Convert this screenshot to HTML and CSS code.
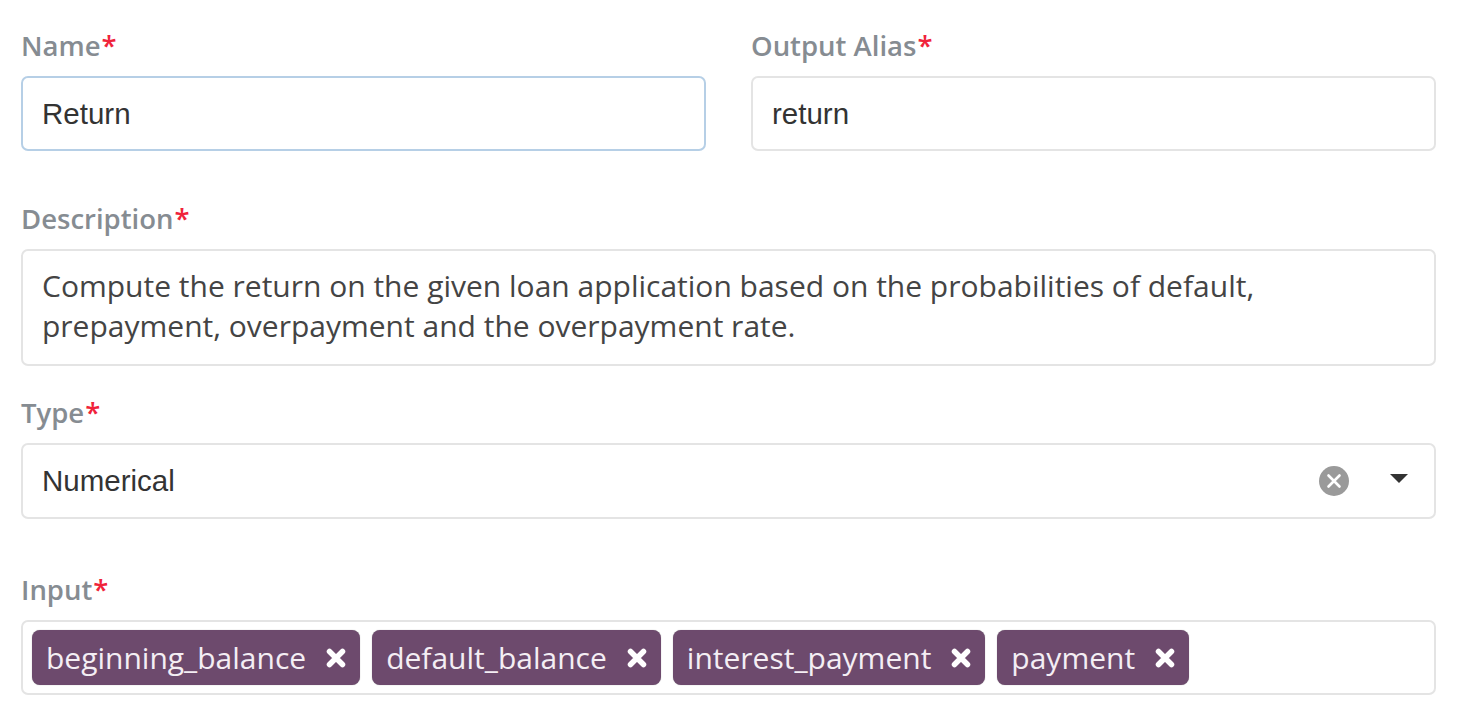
FILE: index.html
```html
<!DOCTYPE html>
<html>
<head>
<meta charset="utf-8">
<link rel="stylesheet" href="styles.css">
</head>
<body>
<form class="form">
  <div class="row group group-top">
    <div class="col">
      <label class="label">Name<span class="req">*</span></label>
      <div class="field field-focus"><span class="sans">Return</span></div>
    </div>
    <div class="col">
      <label class="label">Output Alias<span class="req">*</span></label>
      <div class="field"><span class="sans">return</span></div>
    </div>
  </div>
  <div class="group group-desc">
    <label class="label">Description<span class="req">*</span></label>
    <div class="field field-area">Compute the return on the given loan application based on the probabilities of default, prepayment, overpayment and the overpayment rate.</div>
  </div>
  <div class="group group-type">
    <label class="label">Type<span class="req">*</span></label>
    <div class="field field-select">
      <span class="sans select-value">Numerical</span>
      <span class="clear"><svg width="30" height="30" viewBox="0 0 30 30"><circle cx="15" cy="15" r="15" fill="#9a9a9a"/><path d="M9.5 9.5 L20.5 20.5 M20.5 9.5 L9.5 20.5" stroke="#fff" stroke-width="2.6" stroke-linecap="round"/></svg></span>
      <span class="caret"><svg width="18" height="10" viewBox="0 0 18 10"><path d="M0 0 H18 L9 9 Z" fill="#333"/></svg></span>
    </div>
  </div>
  <div class="group">
    <label class="label">Input<span class="req">*</span></label>
    <div class="field field-tags">
      <span class="tag">beginning_balance<svg class="tag-x" width="20" height="20" viewBox="0 0 20 20"><path d="M3.5 3.5 L16.5 16.5 M16.5 3.5 L3.5 16.5" stroke="#fff" stroke-width="5.5" stroke-linecap="round"/></svg></span>
      <span class="tag">default_balance<svg class="tag-x" width="20" height="20" viewBox="0 0 20 20"><path d="M3.5 3.5 L16.5 16.5 M16.5 3.5 L3.5 16.5" stroke="#fff" stroke-width="5.5" stroke-linecap="round"/></svg></span>
      <span class="tag">interest_payment<svg class="tag-x" width="20" height="20" viewBox="0 0 20 20"><path d="M3.5 3.5 L16.5 16.5 M16.5 3.5 L3.5 16.5" stroke="#fff" stroke-width="5.5" stroke-linecap="round"/></svg></span>
      <span class="tag">payment<svg class="tag-x" width="20" height="20" viewBox="0 0 20 20"><path d="M3.5 3.5 L16.5 16.5 M16.5 3.5 L3.5 16.5" stroke="#fff" stroke-width="5.5" stroke-linecap="round"/></svg></span>
    </div>
  </div>
</form>
</body>
</html>
```
FILE: styles.css
```css
* { box-sizing: border-box; }
html, body { margin: 0; padding: 0; background: #fff; }
body { font-family: "Open Sans", sans-serif; color: #333; }
.form { width: 1436px; padding: 27px 0 0 21px; }
.row { display: flex; gap: 45px; }
.col { flex: 1; }
.group { margin-bottom: 52px; }
.group-top { margin-bottom: 49px; }
.group-desc { margin-bottom: 28px; }
.group-type { margin-bottom: 52px; }
.label { display: block; font-size: 27.5px; font-weight: 600; line-height: 37px; color: #868c92; margin-bottom: 12px; }
.req { color: #f0233a; margin-left: 1px; }
.field { border: 2px solid #e4e4e4; border-radius: 7px; height: 75px; padding: 0 19px; display: flex; align-items: center; font-size: 27px; color: #3a3a3a; background: #fff; }
.field-focus { border-color: #b6cfe6; }
.sans { font-family: "Liberation Sans", Arial, sans-serif; font-size: 29.5px; color: #333; }
.field-area { height: 117px; align-items: flex-start; padding-top: 15px; line-height: 40px; font-size: 30px; color: #444; }
.field-select { height: 76px; }
.select-value { flex: 1; }
.clear { display: flex; margin-right: 41px; }
.caret { display: flex; margin-right: 7px; margin-top: -4px; }
.field-tags { padding: 0 9px; gap: 12px; }
.tag { display: inline-flex; align-items: center; height: 55px; background: #6d4a6d; color: #f4eef4; border-radius: 8px; padding: 0 14px 0 14px; font-size: 30px; box-shadow: 0 0 1px rgba(0,0,0,0.4); }
.tag-x { margin-left: 20px; }
```
